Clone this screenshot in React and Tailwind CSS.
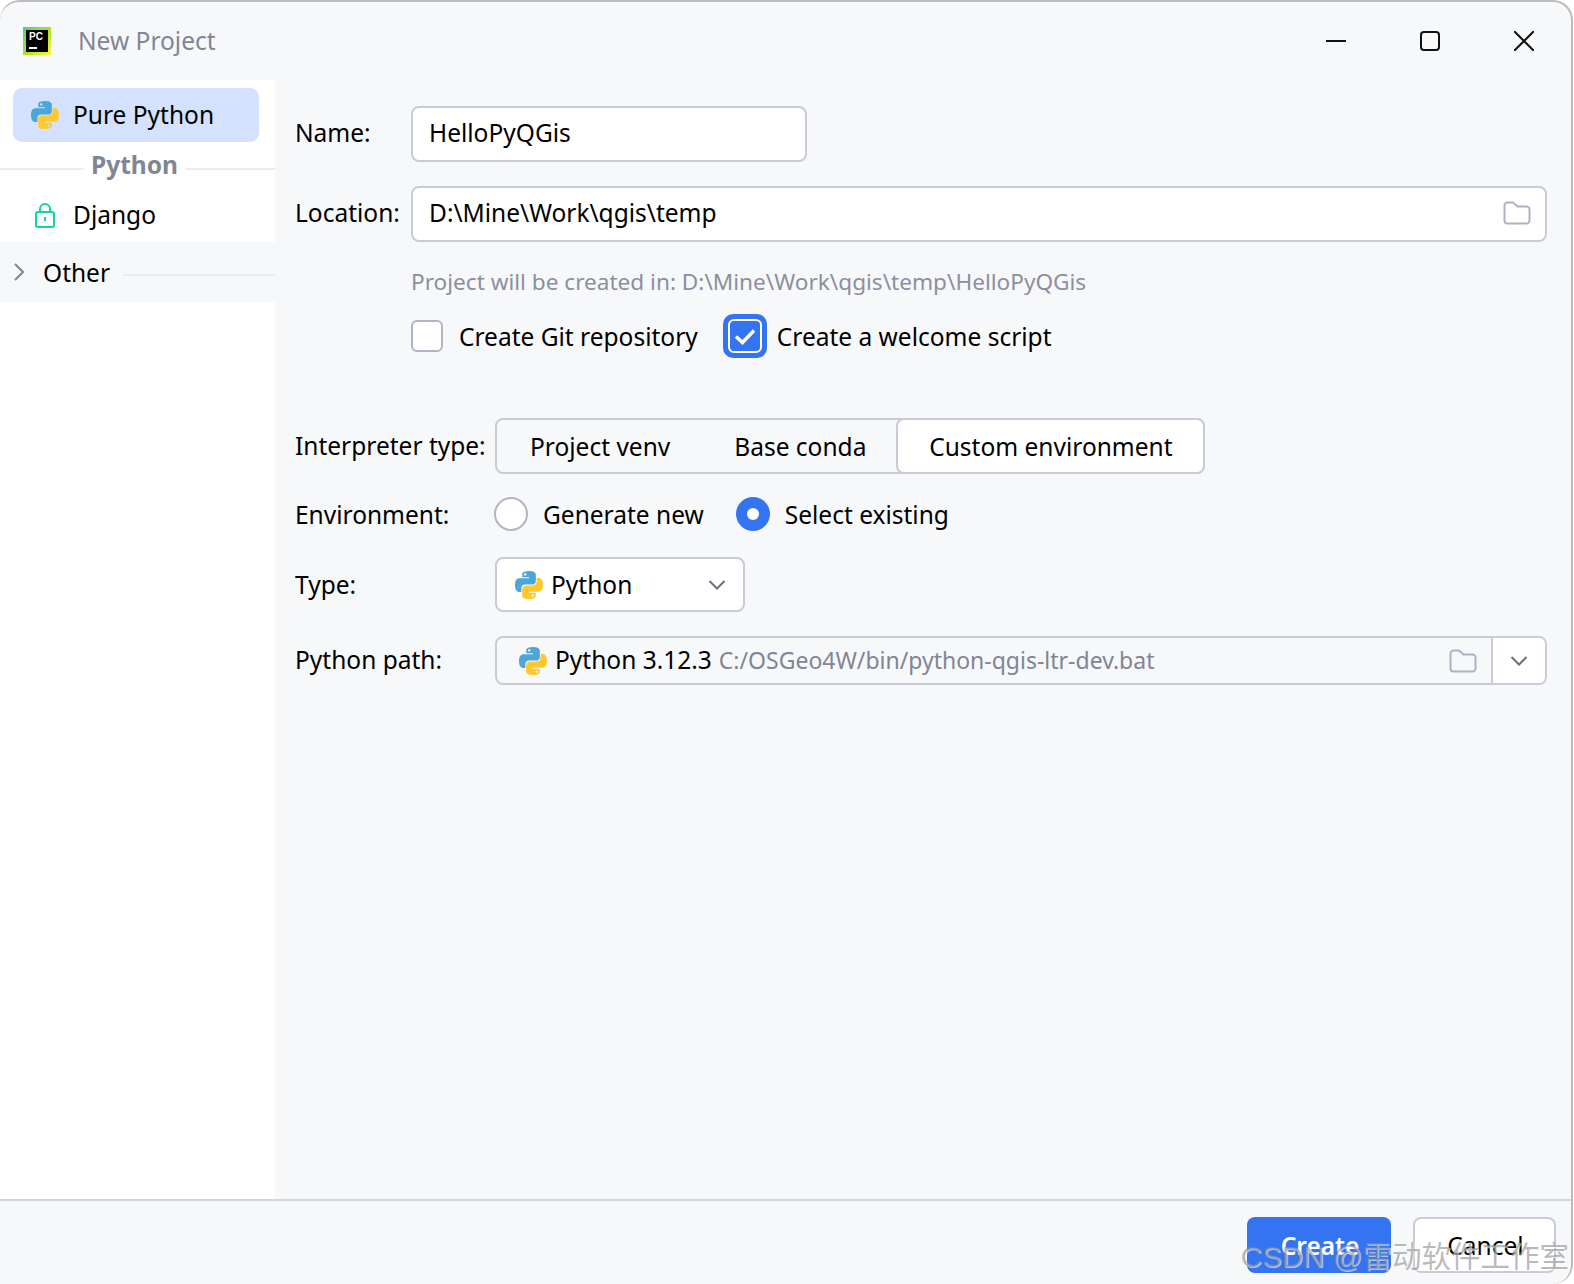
import React from 'react';

const PythonIcon = () => (
  <svg width="28" height="28" viewBox="0 0 110 110" className="shrink-0">
    <path fill="#4ea6d8" fillRule="evenodd" d="M54.9 0C26.8 0 28.6 12.2 28.6 12.2v12.6h26.8v3.8H17.9S0 26.6 0 55c0 28.4 15.7 27.4 15.7 27.4h9.3V69.2s-.5-15.7 15.4-15.7h26.6s14.9.2 14.9-14.4V14.9S84.2 0 54.9 0zM40.1 8.5c2.7 0 4.8 2.2 4.8 4.8s-2.2 4.8-4.8 4.8-4.8-2.2-4.8-4.8 2.2-4.8 4.8-4.8z" />
    <path fill="#fdc92f" fillRule="evenodd" transform="rotate(180 55 55)" d="M54.9 0C26.8 0 28.6 12.2 28.6 12.2v12.6h26.8v3.8H17.9S0 26.6 0 55c0 28.4 15.7 27.4 15.7 27.4h9.3V69.2s-.5-15.7 15.4-15.7h26.6s14.9.2 14.9-14.4V14.9S84.2 0 54.9 0zM40.1 8.5c2.7 0 4.8 2.2 4.8 4.8s-2.2 4.8-4.8 4.8-4.8-2.2-4.8-4.8 2.2-4.8 4.8-4.8z" />
  </svg>
);

const FolderIcon = () => (
  <svg width="28" height="24" viewBox="0 0 28 24" fill="none" stroke="#aeb2c3" strokeWidth="2" className="shrink-0">
    <path d="M1.5 4.5a3 3 0 0 1 3-3h5.5l4.5 4h9a3 3 0 0 1 3 3v11a3 3 0 0 1-3 3h-19a3 3 0 0 1-3-3z" strokeLinejoin="round" />
  </svg>
);

const Chevron = () => (
  <svg width="18" height="10" viewBox="0 0 18 10" fill="none" stroke="#6c707e" strokeWidth="2" className="shrink-0">
    <path d="M1.5 1l7.5 7.5L16.5 1" />
  </svg>
);

function App() {
  return (
    <div className="w-[1574px] h-[1284px] bg-white overflow-hidden text-[24.5px] leading-[34px] text-black font-['Noto_Sans',sans-serif]">
      <div className="relative w-[1573px] h-[1284px] flex flex-col bg-[#f7f8fa] border-t-2 border-r-2 border-[#bcbcbe] rounded-t-[20px] rounded-br-[20px] overflow-hidden">
        {/* title bar */}
        <div className="h-[78px] shrink-0 flex items-center pl-[23px]">
          <div className="w-[28px] h-[28px] p-[3px] bg-gradient-to-br from-[#21d789] via-[#a8e01c] to-[#fcf84a]">
            <div className="w-full h-full bg-black flex flex-col px-[3px] pt-[2px]">
              <span className="text-[10px] leading-[10px] font-bold text-white font-['Liberation_Sans',sans-serif]">PC</span>
              <span className="w-[8px] h-[1.5px] bg-white mt-[5px]"></span>
            </div>
          </div>
          <span className="ml-[27px] text-[#818594]">New Project</span>
          <div className="ml-auto flex -mt-[1px]">
            <button className="w-[94px] h-[40px] flex items-center justify-center">
              <svg width="20" height="20" viewBox="0 0 20 20" stroke="#111" strokeWidth="2"><path d="M0 10h20" /></svg>
            </button>
            <button className="w-[94px] h-[40px] flex items-center justify-center">
              <svg width="20" height="20" viewBox="0 0 20 20" fill="none" stroke="#111" strokeWidth="2"><rect x="1" y="1" width="18" height="18" rx="3" /></svg>
            </button>
            <button className="w-[94px] h-[40px] flex items-center justify-center">
              <svg width="20" height="20" viewBox="0 0 20 20" stroke="#111" strokeWidth="2"><path d="M0 0l20 20M20 0L0 20" /></svg>
            </button>
          </div>
        </div>

        <div className="flex-1 flex min-h-0">
          {/* sidebar */}
          <aside className="w-[275px] shrink-0 bg-white flex flex-col">
            <div className="pt-[8px] h-[162px] shrink-0 flex flex-col">
              <div className="ml-[13px] mr-[16px] h-[54px] rounded-[9px] bg-[#d4e2ff] flex items-center pl-[18px] gap-[14px]">
                <PythonIcon />
                <span>Pure Python</span>
              </div>
              <div className="h-[46px] flex items-center gap-[7px] font-bold text-[#818594]">
                <span className="flex-1 h-[2px] bg-[#ebecf0] mt-[8px]"></span>
                <span>Python</span>
                <span className="w-[90px] h-[2px] bg-[#ebecf0] mt-[8px]"></span>
              </div>
              <div className="h-[54px] flex items-center pl-[35px]">
                <svg width="20" height="25" viewBox="0 0 20 25" fill="none" stroke="#12d6a0" strokeWidth="2" className="shrink-0">
                  <rect x="1" y="9" width="18" height="15" rx="2" />
                  <path d="M5 9V6a5 5 0 0 1 10 0v3" />
                  <path d="M10 14v4" />
                </svg>
                <span className="ml-[18px]">Django</span>
              </div>
            </div>
            <div className="h-[60px] shrink-0 bg-[#f7f8fa] flex items-center pl-[14px]">
              <svg width="10" height="18" viewBox="0 0 10 18" fill="none" stroke="#818594" strokeWidth="2" className="shrink-0">
                <path d="M1 1l8 8-8 8" />
              </svg>
              <span className="ml-[19px] mt-[2px]">Other</span>
              <span className="flex-1 h-[2px] bg-[#ebecf0] ml-[13px] mt-[6px]"></span>
            </div>
          </aside>

          {/* form */}
          <main className="flex-1 min-w-0 pl-[20px] pr-[24px] pt-[26px] flex flex-col">
            <div className="flex items-center">
              <span className="w-[116px] shrink-0 -mt-[2px]">Name:</span>
              <div className="w-[396px] h-[56px] bg-white border-2 border-[#c9ccd6] rounded-[8px] flex items-center px-[16px] pb-[2px]">HelloPyQGis</div>
            </div>
            <div className="flex items-center mt-[24px]">
              <span className="w-[116px] shrink-0 -mt-[2px]">Location:</span>
              <div className="flex-1 h-[56px] bg-white border-2 border-[#c9ccd6] rounded-[8px] flex items-center justify-between pl-[16px] pr-[14px]">
                <span className="-mt-[2px]">D:\Mine\Work\qgis\temp</span>
                <span className="-mt-[2px]"><FolderIcon /></span>
              </div>
            </div>
            <div className="mt-[25px] pl-[116px] h-[30px] flex items-center text-[22.6px] text-[#8c8f9d]">Project will be created in: D:\Mine\Work\qgis\temp\HelloPyQGis</div>
            <div className="mt-[17px] pl-[116px] h-[44px] flex items-center">
              <span className="w-[32px] h-[32px] bg-white border-2 border-[#b0b4c4] rounded-[6px] shrink-0"></span>
              <span className="ml-[16px] mt-[2px]">Create Git repository</span>
              <span className="ml-[25px] w-[44px] h-[44px] bg-[#3574f0] rounded-[10px] flex items-center justify-center shrink-0">
                <span className="w-[34px] h-[34px] border-2 border-white rounded-[6px] flex items-center justify-center">
                  <svg width="22" height="17" viewBox="0 0 22 17" fill="none" stroke="#fff" strokeWidth="3.4"><path d="M2 8.5l6.5 6L20 2.5" /></svg>
                </span>
              </span>
              <span className="ml-[10px] mt-[2px]">Create a welcome script</span>
            </div>
            <div className="mt-[60px] flex items-center">
              <span className="w-[200px] shrink-0 whitespace-nowrap">Interpreter type:</span>
              <div className="h-[56px] border-2 border-[#c9ccd6] rounded-[8px] flex items-center">
                <span className="pl-[33px] pr-[32px] mt-[2px]">Project venv</span>
                <span className="pl-[32px] pr-[30px] mt-[2px]">Base conda</span>
                <span className="-my-[2px] -mr-[2px] h-[56px] w-[309px] bg-white border-2 border-[#c9ccd6] rounded-[8px] flex items-center justify-center pt-[2px]">Custom environment</span>
              </div>
            </div>
            <div className="mt-[23px] h-[34px] flex items-center">
              <span className="w-[199px] shrink-0 mt-[2px]">Environment:</span>
              <span className="w-[34px] h-[34px] rounded-full bg-white border-2 border-[#b0b4c4] shrink-0"></span>
              <span className="ml-[15px] mt-[2px]">Generate new</span>
              <span className="ml-[32px] w-[34px] h-[34px] rounded-full bg-[#3574f0] flex items-center justify-center shrink-0">
                <span className="w-[12px] h-[12px] rounded-full bg-white"></span>
              </span>
              <span className="ml-[15px] mt-[2px]">Select existing</span>
            </div>
            <div className="mt-[26px] flex items-center">
              <span className="w-[200px] shrink-0">Type:</span>
              <div className="w-[250px] h-[55px] bg-white border-2 border-[#c9ccd6] rounded-[8px] flex items-center pl-[18px] pr-[17px]">
                <PythonIcon />
                <span className="ml-[8px]">Python</span>
                <span className="ml-auto"><Chevron /></span>
              </div>
            </div>
            <div className="mt-[24px] flex items-center">
              <span className="w-[200px] shrink-0 -mt-[2px]">Python path:</span>
              <div className="flex-1 h-[49px] border-2 border-[#c9ccd6] rounded-[8px] flex items-center overflow-hidden">
                <div className="flex-1 flex items-center pl-[22px] pr-[14px]">
                  <PythonIcon />
                  <span className="ml-[8px] -mt-[2px]">Python 3.12.3</span>
                  <span className="ml-[7px] -mt-[2px] text-[23px] text-[#818594]">C:/OSGeo4W/bin/python-qgis-ltr-dev.bat</span>
                  <span className="ml-auto"><FolderIcon /></span>
                </div>
                <div className="w-[54px] h-full bg-white border-l-2 border-[#c9ccd6] flex items-center justify-center shrink-0">
                  <Chevron />
                </div>
              </div>
            </div>
          </main>
        </div>

        {/* footer */}
        <div className="h-[85px] shrink-0 border-t-2 border-[#d3d5db] flex justify-end gap-[22px] pt-[16px] pr-[15px]">
          <button className="w-[144px] h-[56px] bg-[#3574f0] rounded-[8px] text-white font-semibold pt-[2px] pl-[2px]">Create</button>
          <button className="w-[143px] h-[56px] bg-white border-2 border-[#c9ccd6] rounded-[8px] pt-[2px] pl-[2px]">Cancel</button>
        </div>

        {/* CSDN watermark */}
        <span className="absolute right-[2px] bottom-[10px] text-[29.5px] leading-[34px] whitespace-nowrap text-[#8b8b8b99] [text-shadow:1px_1px_0_#ffffff90] font-['Liberation_Sans','Noto_Sans_CJK_SC',sans-serif]">CSDN @雷动软件工作室</span>
      </div>
    </div>
  );
}

export default App;
